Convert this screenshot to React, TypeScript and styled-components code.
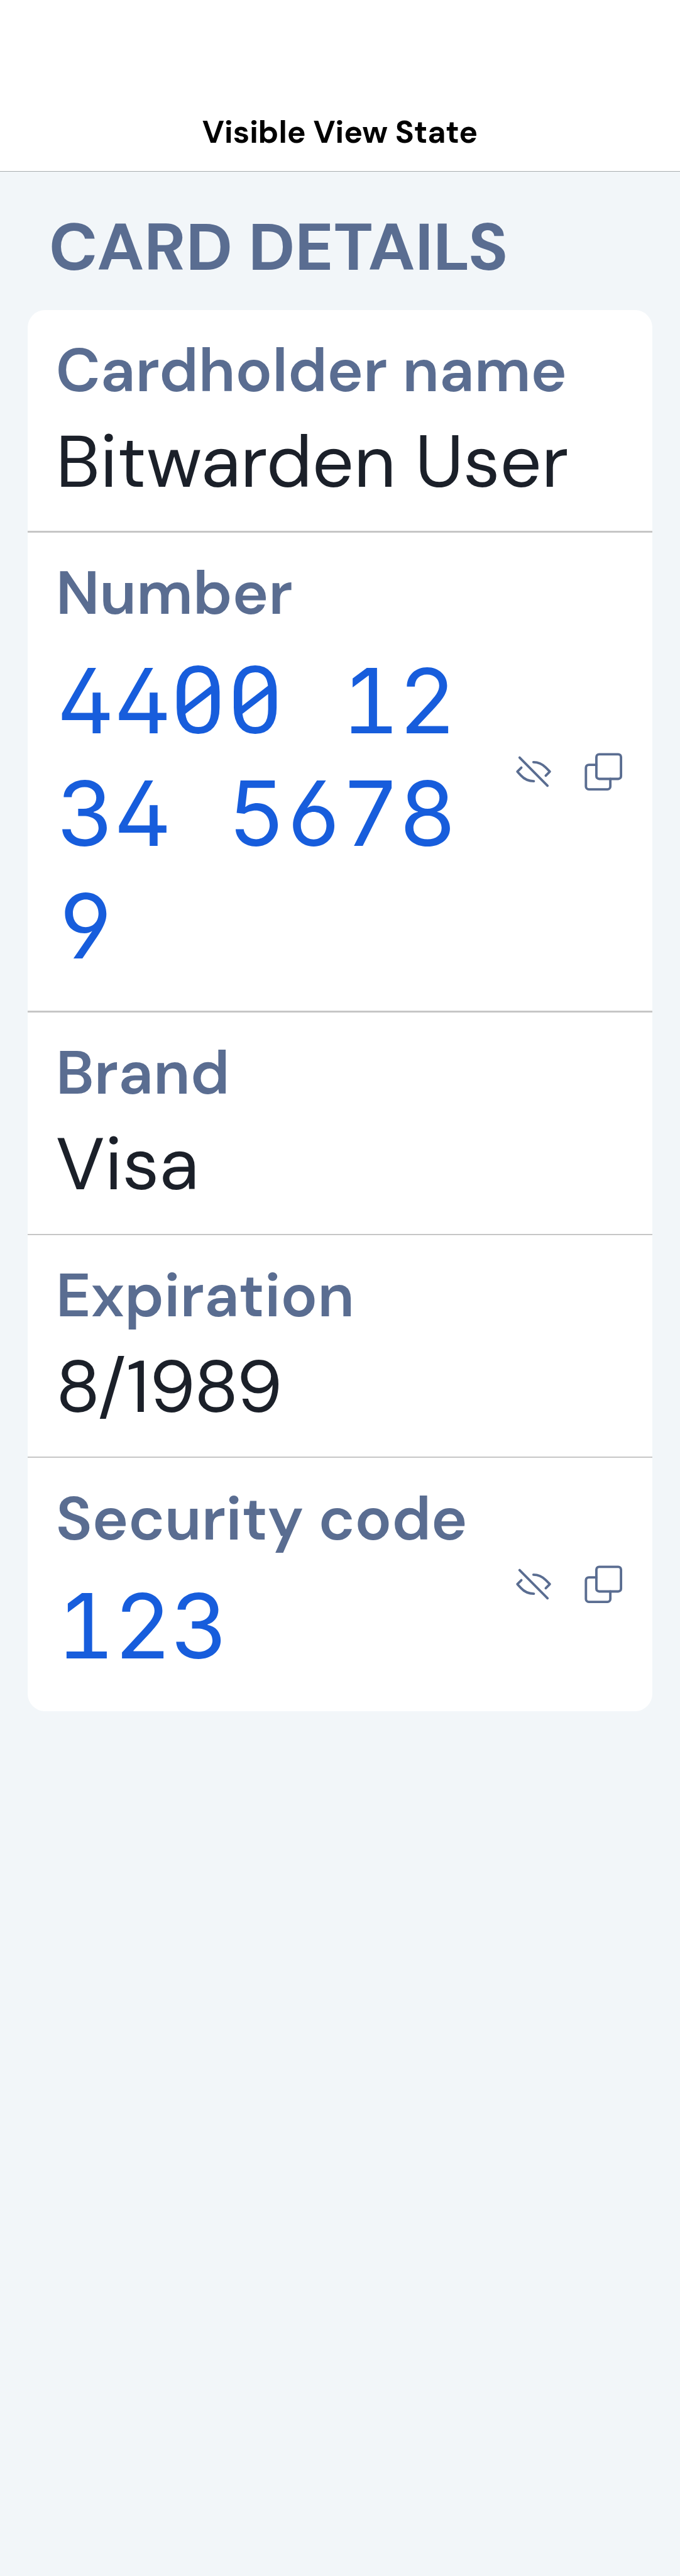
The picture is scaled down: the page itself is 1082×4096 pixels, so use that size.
import React from "react";
import styled, { createGlobalStyle } from "styled-components";

// Converts layout units (1170 wide) to the 1082px wide page.
const u = (n: number) => `${((n * 1082) / 1170).toFixed(3)}px`;

const color = {
  page: "#f2f6f9",
  surface: "#ffffff",
  heading: "#5a6d91",
  text: "#1b2029",
  code: "#175ddc",
  divider: "#c6c6c6",
  hairline: "#a8adaf",
};

const GlobalStyle = createGlobalStyle`
  *, *::before, *::after { box-sizing: border-box; }
  body {
    margin: 0;
    background: ${color.page};
    font-family: "DM Sans", Inter, sans-serif;
  }
`;

const Page = styled.div`
  display: flex;
  flex-direction: column;
  width: 1082px;
  height: 4096px;
  overflow: hidden;
  background: ${color.page};
`;

const NavigationBar = styled.header`
  display: flex;
  align-items: flex-end;
  justify-content: center;
  flex: none;
  height: 273px;
  padding-bottom: 30px;
  border-bottom: 1px solid ${color.hairline};
  background: ${color.surface};
`;

const NavigationTitle = styled.h1`
  margin: 0;
  color: #000;
  font-size: 49.8px;
  font-weight: 700;
  line-height: 64px;
  white-space: nowrap;
`;

const Section = styled.section`
  display: flex;
  flex-direction: column;
  padding: 54.5px ${u(48)} 0;
`;

const SectionTitle = styled.h2`
  margin: 0;
  padding-left: ${u(36)};
  height: 165.5px;
  color: ${color.heading};
  font-size: 105.3px;
  font-weight: 700;
  line-height: 131px;
  white-space: nowrap;
`;

const Card = styled.div`
  display: flex;
  flex-direction: column;
  overflow: hidden;
  border-radius: ${u(30)};
  background: ${color.surface};
`;

const Row = styled.div<{ $height: number }>`
  display: flex;
  align-items: center;
  height: ${(p) => u(p.$height)};
  padding: 0 ${u(48.7)} 0 ${u(48)};
`;

const Divider = styled.div`
  flex: none;
  height: ${u(3)};
  background: ${color.divider};
`;

const Field = styled.div`
  display: flex;
  flex: 1;
  flex-direction: column;
  align-self: stretch;
  min-width: 0;
  padding-top: 33.2px;
`;

const Label = styled.div`
  color: ${color.heading};
  font-size: 97.1px;
  font-weight: 600;
  line-height: 126.4px;
  white-space: nowrap;
`;

const Value = styled.div`
  margin-top: 6px;
  color: ${color.text};
  font-size: 116.5px;
  line-height: 151.7px;
  white-space: nowrap;
`;

const Code = styled.div`
  margin-top: 18px;
  padding-left: 1.5px;
  color: ${color.code};
  font-family: Inter, "Liberation Mono", monospace;
  font-size: 142.4px;
  font-feature-settings: "tnum", "zero", "cv02", "cv03", "cv04";
  letter-spacing: -1.65px;
  line-height: 179.1px;
`;

const CodeLine = styled.div`
  height: 179.1px;
  white-space: pre;
`;

const Gap = styled.span`
  display: inline-block;
  width: ${u(98)};
`;

const Zeros = styled.span`
  margin: 0 0.8px 0 -0.8px;
  font-family: "Roboto Mono", Inter, monospace;
  font-size: 148px;
  letter-spacing: 1.8px;
  line-height: 0;
`;

const Actions = styled.div`
  display: flex;
  flex: none;
  align-items: center;
  gap: ${u(53.3)};
`;

const IconButton = styled.button`
  display: flex;
  padding: 0;
  border: 0;
  background: none;
  color: ${color.heading};
`;

const Icon = styled.svg<{ $width: number }>`
  display: block;
  width: ${(p) => u(p.$width)};
  height: auto;
  fill: none;
  stroke: currentColor;
  stroke-width: 12.5;
  stroke-linecap: round;
  stroke-linejoin: round;
`;

function HideIcon() {
  return (
    <Icon $width={63.333} viewBox="50 81 190 180">
      <path d="M72 96 216 241" />
      <path d="M143.500 119.500C172 119.500 191 131 207 147L228 168.500 207 189" />
      <path d="M81 148 60.500 168.500 79 188.500C96 207 115 217.500 145.500 217.500" />
    </Icon>
  );
}

function CopyIcon() {
  return (
    <Icon $width={70} viewBox="400 66 210 210">
      <rect x="468" y="80" width="127" height="127" rx="14" />
      <path d="M468 134.500H429a15 15 0 0 0-15 15V246a15 15 0 0 0 15 15h96a15 15 0 0 0 15-15V207" />
    </Icon>
  );
}

function SecretActions() {
  return (
    <Actions>
      <IconButton aria-label="Hide">
        <HideIcon />
      </IconButton>
      <IconButton aria-label="Copy">
        <CopyIcon />
      </IconButton>
    </Actions>
  );
}

// Runs of zeros use the slashed form, and a space fills one full digit cell.
function renderRun(run: string, key: number) {
  if (run === " ") return <Gap key={key}> </Gap>;
  if (run[0] === "0") return <Zeros key={key}>{run}</Zeros>;
  return run;
}

function SecretText({ lines }: { lines: string[] }) {
  return (
    <Code>
      {lines.map((line) => (
        <CodeLine key={line}>{(line.match(/0+| |[1-9]+/g) ?? []).map(renderRun)}</CodeLine>
      ))}
    </Code>
  );
}

type Item = { label: string; height: number; value?: string; secret?: string[] };

const items: Item[] = [
  { label: "Cardholder name", height: 380, value: "Bitwarden User" },
  { label: "Number", height: 822, secret: ["4400 12", "34 5678", "9"] },
  { label: "Brand", height: 380, value: "Visa" },
  { label: "Expiration", height: 380, value: "8/1989" },
  { label: "Security code", height: 435, secret: ["123"] },
];

export default function App() {
  return (
    <Page>
      <GlobalStyle />
      <NavigationBar>
        <NavigationTitle>Visible View State</NavigationTitle>
      </NavigationBar>
      <Section>
        <SectionTitle>CARD DETAILS</SectionTitle>
        <Card>
          {items.map((item, i) => (
            <React.Fragment key={item.label}>
              {i > 0 && <Divider />}
              <Row $height={item.height}>
                <Field>
                  <Label>{item.label}</Label>
                  {item.value && <Value>{item.value}</Value>}
                  {item.secret && <SecretText lines={item.secret} />}
                </Field>
                {item.secret && <SecretActions />}
              </Row>
            </React.Fragment>
          ))}
        </Card>
      </Section>
    </Page>
  );
}
